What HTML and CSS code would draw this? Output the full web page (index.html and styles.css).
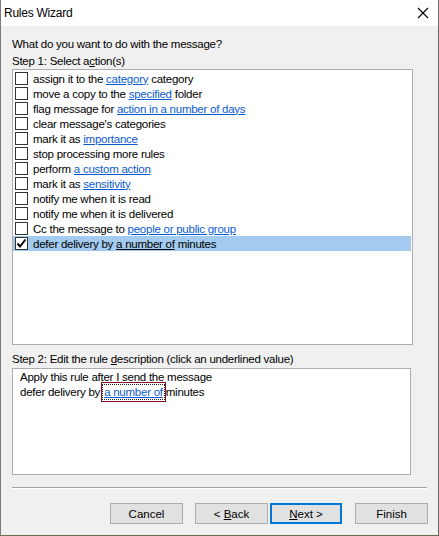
FILE: index.html
```html
<!DOCTYPE html>
<html>
<head>
<meta charset="utf-8">
<link rel="stylesheet" href="styles.css">
</head>
<body>
<div class="window">
  <div class="titlebar">
    <span class="title">Rules Wizard</span>
    <svg class="close" width="12" height="12" viewBox="0 0 12 12"><path d="M1 1 L11 11 M11 1 L1 11" stroke="#000" stroke-width="1.1" fill="none"/></svg>
  </div>
  <div class="content">
    <div class="label q">What do you want to do with the message?</div>
    <div class="label">Step 1: Select a<u>c</u>tion(s)</div>
    <div class="listbox">
      <div class="row"><span class="cb"></span><span>assign it to the <a>category</a> category</span></div>
      <div class="row"><span class="cb"></span><span>move a copy to the <a>specified</a> folder</span></div>
      <div class="row"><span class="cb"></span><span>flag message for <a>action in a number of days</a></span></div>
      <div class="row"><span class="cb"></span><span>clear message's categories</span></div>
      <div class="row"><span class="cb"></span><span>mark it as <a>importance</a></span></div>
      <div class="row"><span class="cb"></span><span>stop processing more rules</span></div>
      <div class="row"><span class="cb"></span><span>perform <a>a custom action</a></span></div>
      <div class="row"><span class="cb"></span><span>mark it as <a>sensitivity</a></span></div>
      <div class="row"><span class="cb"></span><span>notify me when it is read</span></div>
      <div class="row"><span class="cb"></span><span>notify me when it is delivered</span></div>
      <div class="row"><span class="cb"></span><span>Cc the message to <a>people or public group</a></span></div>
      <div class="row sel"><span class="cb checked"><svg width="11" height="11" viewBox="0 0 11 11"><path d="M1.5 5.5 L4 8.5 L9.5 1.5" stroke="#000" stroke-width="2" fill="none"/></svg></span><span>defer delivery by <a class="dark">a number of</a> minutes</span></div>
    </div>
    <div class="label step2">Step 2: Edit the rule <u>d</u>escription (click an underlined value)</div>
    <div class="descbox">
      <div class="dline">Apply this rule after I send the message</div>
      <div class="dline">defer delivery by<span class="focus"><a>a number of</a></span>minutes</div>
    </div>
    <div class="sep"></div>
    <div class="buttons">
      <button class="btn cancel">Cancel</button>
      <button class="btn back">&lt; <u>B</u>ack</button>
      <button class="btn default next"><u>N</u>ext &gt;</button>
      <button class="btn">Finish</button>
    </div>
  </div>
</div>
</body>
</html>
```
FILE: styles.css
```css
html, body {
  margin: 0;
  padding: 0;
  background: #f0f0f0;
}
.window {
  width: 437px;
  height: 535px;
  border-left: 1px solid #7a7a7a;
  border-right: 1px solid #6b6b6b;
  border-bottom: 1px solid #6b6b4f;
  background: #f0f0f0;
  font-family: "Liberation Sans", Arial, sans-serif;
  font-size: 11.5px;
  letter-spacing: -0.25px;
  color: #000;
  display: flex;
  flex-direction: column;
}
.titlebar {
  height: 26px;
  background: #fff;
  display: flex;
  align-items: center;
  justify-content: space-between;
  padding: 0 9px 0 3px;
}
.title {
  font-size: 12px;
}
.close {
  display: block;
}
.content {
  padding: 10px 0 0 11px;
  display: flex;
  flex-direction: column;
}
.label {
  height: 16px;
  line-height: 16px;
  white-space: nowrap;
}
.q {
  margin-bottom: 1px;
}
u {
  text-decoration: underline;
}
.listbox {
  width: 399px;
  height: 272px;
  border: 1px solid #adadad;
  background: #fff;
  padding: 1px 0 1px 0;
  box-sizing: content-box;
}
.row {
  height: 15px;
  display: flex;
  align-items: center;
  white-space: nowrap;
}
.row.sel {
  background: #a2cbef;
  margin-right: 1px;
}
.cb {
  width: 11px;
  height: 11px;
  border: 1px solid #333;
  background: #fff;
  margin: 0 5px 0 2px;
  display: flex;
  align-items: center;
  justify-content: center;
  flex-shrink: 0;
}
.cb svg {
  display: block;
}
a {
  color: #0b5bd0;
  text-decoration: underline;
}
a.dark {
  color: #000;
}
.step2 {
  margin-top: 6px;
}
.descbox {
  width: 399px;
  height: 107px;
  border: 1px solid #adadad;
  background: #fff;
  padding: 1px 0 0 7px;
  box-sizing: border-box;
  margin-top: 1px;
}
.dline {
  height: 15px;
  line-height: 15px;
  white-space: nowrap;
}
.focus {
  display: inline-block;
  border: 1px solid #8a1024;
  padding: 2px 1px;
  line-height: 14px;
  margin: -3px 0 -3px 1px;
}
.focus a {
  display: inline-block;
  outline: 1px dotted #222;
  padding: 0 1px;
}
.sep {
  width: 415px;
  height: 1px;
  background: #a0a0a0;
  border-bottom: 1px solid #fff;
  margin-top: 12px;
}
.buttons {
  display: flex;
  justify-content: flex-end;
  padding-right: 10px;
  margin-top: 14px;
}
.btn {
  width: 73px;
  height: 21px;
  background: #e1e1e1;
  border: 1px solid #adadad;
  font-family: "Liberation Sans", Arial, sans-serif;
  font-size: 11.5px;
  color: #000;
  padding: 0;
  margin: 0;
  box-sizing: border-box;
}
.btn.cancel {
  margin-right: 12px;
}
.btn.back {
  margin-right: 2px;
}
.btn.next {
  width: 72px;
  margin-right: 13px;
}
.btn.default {
  border: 2px solid #0078d7;
}
```
